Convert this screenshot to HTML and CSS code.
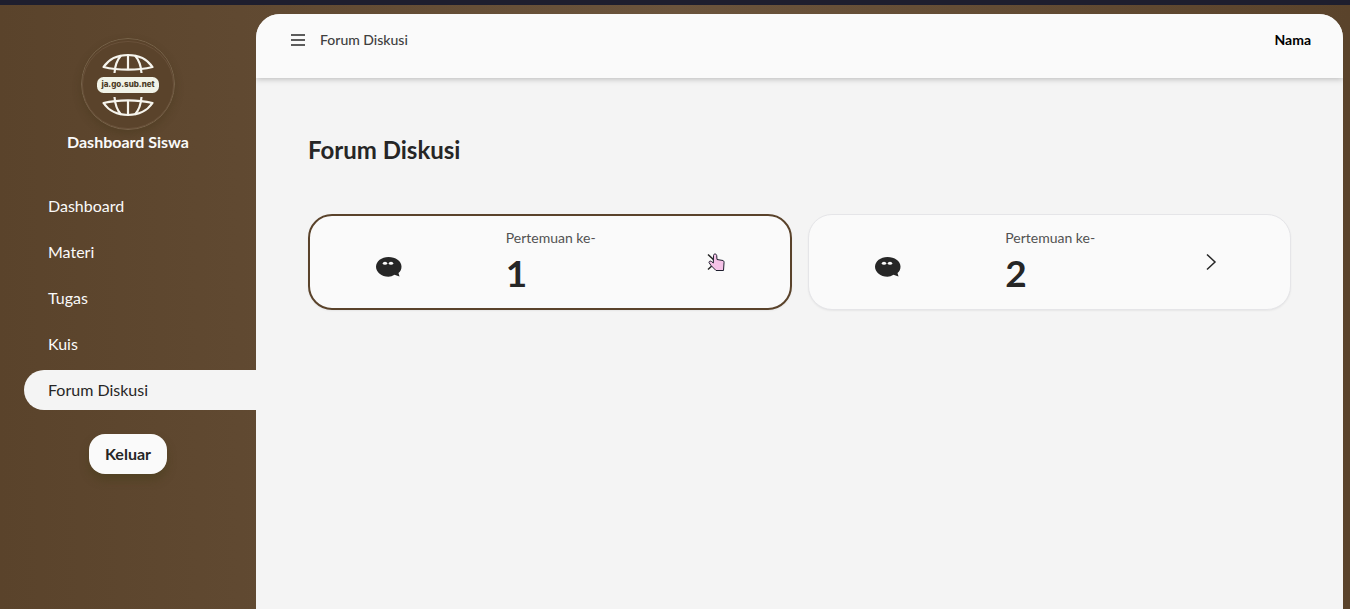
FILE: index.html
```
<!DOCTYPE html>
<html lang="id">
<head>
    <meta charset="UTF-8">
    <meta name="viewport" content="width=device-width, initial-scale=1.0">
    <title>Forum Diskusi</title>
    <link rel="stylesheet" href="styles.css">
</head>
<body>
    <aside class="sidebar">
        <svg class="logo" viewBox="0 0 94 92" role="img" aria-label="ja.go.sub.net">
            <ellipse cx="47" cy="46" rx="46.5" ry="45.5" fill="#5a432b" stroke="#7d6b52" stroke-width=".8"/>
            <ellipse cx="47" cy="47" rx="45.5" ry="43.5" fill="none" stroke="#735b45" stroke-width=".6"/>
            <g fill="none" stroke="#f6f5ee" stroke-width="2.2" stroke-linejoin="round">
                <path d="M22.500 29C28 21 37 17 47 17S66 21 71.500 29C57 32.500 37 32.500 22.500 29Z"/>
                <path d="M47 17V32M40 17.500C36 22 34 28 33.500 35M54 17.500C58 22 60 28 60.500 35"/>
                <path d="M22.500 65C28 73 37 77 47 77S66 73 71.500 65C57 61.500 37 61.500 22.500 65Z"/>
                <path d="M47 62V77M33.500 59C34 66 36 72 40 76.500M60.500 59C60 66 58 72 54 76.500"/>
            </g>
            <rect x="16" y="39" width="62" height="16" rx="6.500" fill="#f1f3e8"/>
            <text class="logo-text" x="47" y="49" text-anchor="middle">ja.go.sub.net</text>
        </svg>
        <div class="brand">Dashboard Siswa</div>
        <nav class="menu">
            <a href="#">Dashboard</a>
            <a href="#">Materi</a>
            <a href="#">Tugas</a>
            <a href="#">Kuis</a>
            <a href="#" class="active">Forum Diskusi</a>
        </nav>
        <button class="logout">Keluar</button>
    </aside>

    <main class="main">
        <header class="topbar">
            <button class="toggle" aria-label="Menu">
                <svg width="14" height="12" viewBox="0 0 14 12" fill="none" stroke="#5c5c5c" stroke-width="1.800">
                    <path d="M0 1H14M0 6H14M0 11H14"/>
                </svg>
            </button>
            <span class="page-name">Forum Diskusi</span>
            <span class="user">Nama</span>
        </header>

        <section class="content">
            <h1>Forum Diskusi</h1>
            <div class="cards">
                <a href="#" class="card selected">
                    <svg class="chat" width="26" height="20" viewBox="0 0 26 20">
                        <path fill="#262626" d="M12.500 0C19.500 0 25.500 4 25.500 9.500C25.500 12.500 24.500 14.500 22.500 16L23.500 19.500L18.500 17.800C16.500 19 14.500 19.700 12.500 19.700C5.500 19.700 0 15 0 9.700S5.500 0 12.500 0Z"/>
                        <ellipse cx="9" cy="6.300" rx="2.200" ry="1.500" fill="#fafafa"/>
                        <ellipse cx="15" cy="6.300" rx="2.200" ry="1.500" fill="#fafafa"/>
                    </svg>
                    <div class="meeting">
                        <span>Pertemuan ke-</span>
                        <strong>1</strong>
                    </div>
                    <div class="arrow">
                        <svg width="24" height="24" viewBox="0 0 24 24" fill="none" stroke="#262626" stroke-width="1.500">
                            <path d="M8 4.500L16 12L8 19.500"/>
                        </svg>
                        <svg class="pointer" width="18" height="20" viewBox="0 0 18 20">
                            <path d="M5.500 2.500C5.500 .5 8.500 .5 8.700 2.500L9 6.500L15 7.500C16 8 16.200 9 16 10L15.500 17.500H8L3 12.500L1 9.500C1 8 2.500 7.800 3.500 8.500L5.300 10Z" fill="#f5c2e7" stroke="#1e1e2e" stroke-width="1"/>
                        </svg>
                    </div>
                </a>
                <a href="#" class="card">
                    <svg class="chat" width="26" height="20" viewBox="0 0 26 20">
                        <path fill="#262626" d="M12.500 0C19.500 0 25.500 4 25.500 9.500C25.500 12.500 24.500 14.500 22.500 16L23.500 19.500L18.500 17.800C16.500 19 14.500 19.700 12.500 19.700C5.500 19.700 0 15 0 9.700S5.500 0 12.500 0Z"/>
                        <ellipse cx="9" cy="6.300" rx="2.200" ry="1.500" fill="#fafafa"/>
                        <ellipse cx="15" cy="6.300" rx="2.200" ry="1.500" fill="#fafafa"/>
                    </svg>
                    <div class="meeting">
                        <span>Pertemuan ke-</span>
                        <strong>2</strong>
                    </div>
                    <div class="arrow">
                        <svg width="24" height="24" viewBox="0 0 24 24" fill="none" stroke="#262626" stroke-width="1.500">
                            <path d="M8 4.500L16 12L8 19.500"/>
                        </svg>
                    </div>
                </a>
            </div>
        </section>
    </main>
</body>
</html>
```
FILE: styles.css
```
*{
    box-sizing: border-box;
}
body{
    margin: 0;
    min-height: 100vh;
    display: flex;
    font-family: Lato, "Liberation Sans", sans-serif;
    font-size: 16px;
    line-height: 24px;
    color: #262626;
    background: linear-gradient(to right, #5a432b, #6b543c 50%, #5a432b);
    border-top: 5px solid #1e1e2e;
    padding-right: 7px;
}
a{
    text-decoration: none;
    color: inherit;
}
button{
    font: inherit;
    color: inherit;
    border: none;
    cursor: pointer;
}

/* sidebar */
.sidebar{
    width: 256px;
    flex-shrink: 0;
    display: flex;
    flex-direction: column;
    align-items: center;
    padding-top: 33px;
}
.logo{
    width: 94px;
    height: 92px;
    border-radius: 50%;
    box-shadow: 0 4px 8px rgba(60, 50, 20, .3);
}
.logo-text{
    font-family: Inter, "Liberation Sans", sans-serif;
    font-size: 8px;
    font-weight: 800;
    fill: #4a3a25;
}
.brand{
    font-weight: bold;
    color: #fafafa;
}
.menu{
    align-self: stretch;
    display: flex;
    flex-direction: column;
    gap: 6px;
    padding: 32px 0 24px 24px;
}
.menu a{
    padding: 8px 24px;
    color: #fafafa;
    border-radius: 20px 0 0 20px;
}
.menu .active{
    background-color: #f4f4f4;
    color: #262626;
}
.logout{
    padding: 8px 16px;
    font-weight: bold;
    background-color: #fafafa;
    border-radius: 16px;
    box-shadow: 0 6px 10px rgba(65, 60, 20, .4);
}

/* main */
.main{
    flex: 1;
    margin-top: 9px;
    background-color: #f4f4f4;
    border-radius: 24px 24px 0 0;
    overflow: hidden;
}
.topbar{
    display: flex;
    align-items: center;
    height: 64px;
    padding: 0 32px 12px 35px;
    font-size: 14px;
    background-color: #fafafa;
    box-shadow: 0 1px 6px rgba(0, 0, 0, .25);
}
.toggle{
    display: flex;
    padding: 0;
    background: none;
}
.page-name{
    margin-left: 15px;
    font-weight: 500;
    color: #404040;
}
.user{
    margin-left: auto;
    font-weight: bold;
    color: #000;
}
.content{
    padding: 56px 52px;
}
h1{
    margin: 0 0 48px;
    font-size: 24px;
    line-height: 32px;
}
.cards{
    display: grid;
    grid-template-columns: 1fr 1fr;
    gap: 16px;
}
.card{
    height: 96px;
    display: flex;
    justify-content: space-around;
    padding: 11px 15px;
    background-color: #fafafa;
    border: 1px solid #e5e5e8;
    border-radius: 24px;
    box-shadow: 0 1px 2px rgba(0, 0, 0, .06);
}
.selected{
    border: 2px solid #5a432b;
    padding: 10px 14px;
}
.chat{
    margin-top: 31px;
}
.meeting{
    display: flex;
    flex-direction: column;
}
.meeting span{
    font-size: 14px;
    color: #525252;
}
.meeting strong{
    font-size: 37px;
    line-height: 46px;
}
.arrow{
    position: relative;
    margin-top: 24px;
    height: 24px;
}
.pointer{
    position: absolute;
    left: 8px;
    top: 3px;
}
```
